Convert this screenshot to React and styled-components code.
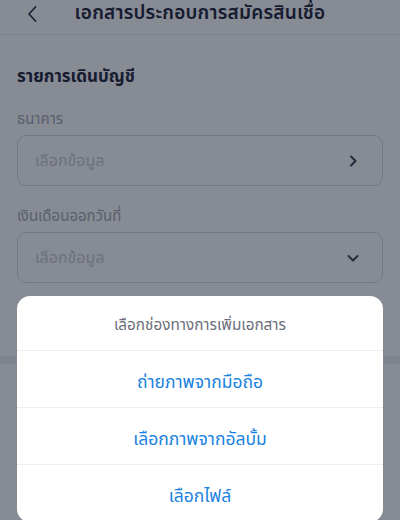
import React from "react";
import styled, { createGlobalStyle } from "styled-components";

const GlobalStyle = createGlobalStyle`
  html, body {
    margin: 0;
    padding: 0;
    background: #ffffff;
    font-family: "Noto Sans Thai", "Noto Sans", "DejaVu Sans", sans-serif;
    overflow: hidden;
  }
  * {
    box-sizing: border-box;
  }
`;

const Page = styled.div`
  width: 400px;
  height: 520px;
  position: relative;
  overflow: hidden;
  background: #ffffff;
`;

const Header = styled.div`
  height: 35px;
  display: flex;
  align-items: center;
  justify-content: center;
  position: relative;
  border-bottom: 1px solid #e6e8ee;
  padding-bottom: 7px;
`;

const BackButton = styled.button`
  position: absolute;
  left: 20px;
  top: 2px;
  height: 24px;
  width: 24px;
  border: none;
  background: transparent;
  padding: 0;
  display: flex;
  align-items: center;
  justify-content: center;
  color: #2c3045;
`;

const Title = styled.h1`
  margin: 0;
  font-size: 19px;
  line-height: 24px;
  font-weight: 600;
  color: #1d2136;
  letter-spacing: 0.2px;
`;

const Section = styled.div`
  padding: 30px 17px 0;
  display: flex;
  flex-direction: column;
`;

const SectionTitle = styled.h2`
  margin: 0 0 21px;
  font-size: 17px;
  line-height: 24px;
  font-weight: 700;
  color: #1d2136;
`;

const Label = styled.div`
  font-size: 15px;
  line-height: 20px;
  color: #a3a7b2;
  margin-bottom: 5px;
`;

const Field = styled.div`
  height: 51px;
  border: 1px solid #d6d9e2;
  border-radius: 9px;
  display: flex;
  align-items: center;
  justify-content: space-between;
  padding: 0 22px 0 17px;
  margin-bottom: ${({ $gap }) => $gap || 0}px;
`;

const Placeholder = styled.span`
  font-size: 16px;
  line-height: 22px;
  color: #c8cad2;
`;

const Separator = styled.div`
  height: 8px;
  background: #eef0f3;
  margin-top: 73px;
`;

const Overlay = styled.div`
  position: absolute;
  inset: 0;
  background: rgba(15, 23, 42, 0.5);
`;

const Sheet = styled.div`
  position: absolute;
  left: 17px;
  right: 17px;
  top: 296px;
  background: #ffffff;
  border-radius: 13px;
  overflow: hidden;
`;

const SheetTitle = styled.div`
  height: 55px;
  display: flex;
  align-items: center;
  justify-content: center;
  padding-top: 5px;
  font-size: 15.3px;
  color: #6b6e7a;
  border-bottom: 1px solid #eeeff2;
`;

const Option = styled.button`
  width: 100%;
  height: 57px;
  border: none;
  background: transparent;
  display: flex;
  align-items: center;
  justify-content: center;
  font-family: inherit;
  font-size: 17.5px;
  color: #1a82e0;
  border-bottom: 1px solid #eeeff2;
  padding: 6px 0 0;
  &:last-child {
    border-bottom: none;
  }
`;

const ChevronRight = () => (
  <svg width="14" height="14" viewBox="0 0 14 14" fill="none">
    <path d="M5 2.5L9.5 7L5 11.5" stroke="#3a3e52" strokeWidth="2" strokeLinecap="round" strokeLinejoin="round" />
  </svg>
);

const ChevronDown = () => (
  <svg width="14" height="14" viewBox="0 0 14 14" fill="none">
    <path d="M2.5 5L7 9.5L11.5 5" stroke="#3a3e52" strokeWidth="2" strokeLinecap="round" strokeLinejoin="round" />
  </svg>
);

const BackIcon = () => (
  <svg width="14" height="20" viewBox="0 0 14 20" fill="none">
    <path d="M10.5 3L4 10L10.5 17" stroke="#2c3045" strokeWidth="1.8" strokeLinecap="round" strokeLinejoin="round" />
  </svg>
);

const options = ["ถ่ายภาพจากมือถือ", "เลือกภาพจากอัลบั้ม", "เลือกไฟล์"];

export default function App() {
  return (
    <>
      <GlobalStyle />
      <Page>
        <Header>
          <BackButton>
            <BackIcon />
          </BackButton>
          <Title>เอกสารประกอบการสมัครสินเชื่อ</Title>
        </Header>
        <Section>
          <SectionTitle>รายการเดินบัญชี</SectionTitle>
          <Label>ธนาคาร</Label>
          <Field $gap={21}>
            <Placeholder>เลือกข้อมูล</Placeholder>
            <ChevronRight />
          </Field>
          <Label>เงินเดือนออกวันที่</Label>
          <Field>
            <Placeholder>เลือกข้อมูล</Placeholder>
            <ChevronDown />
          </Field>
        </Section>
        <Separator />
        <Overlay />
        <Sheet>
          <SheetTitle>เลือกช่องทางการเพิ่มเอกสาร</SheetTitle>
          {options.map((o) => (
            <Option key={o}>{o}</Option>
          ))}
        </Sheet>
      </Page>
    </>
  );
}
